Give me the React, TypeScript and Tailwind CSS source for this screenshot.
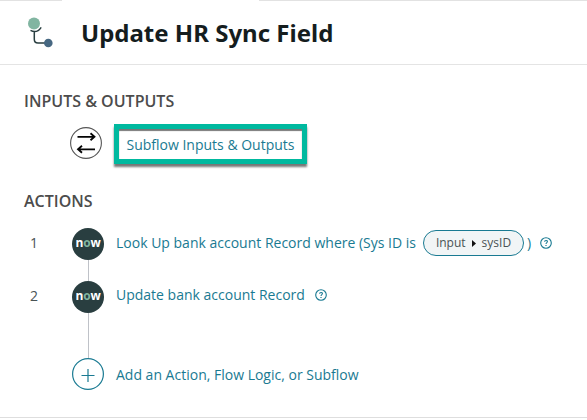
const Help = () => (
  <svg className="h-3 w-3 shrink-0" viewBox="0 0 12 12" fill="none" stroke="#197a92">
    <circle cx="6" cy="6" r="5.3" strokeWidth="1.1" />
    <path d="M4.6 4.8C4.6 3 7.5 3 7.4 4.7C7.3 5.6 6 5.6 6 7" strokeWidth="1.1" />
    <path d="M6 7.9V9" strokeWidth="1.2" />
  </svg>
);

const NowBadge = () => (
  <div className="flex h-8 w-8 items-center justify-center rounded-full bg-[#293e40] pb-0.5 font-['Open_Sans',sans-serif] text-xs leading-none font-bold tracking-[-0.15px] text-white">
    n<span className="text-[#81b5a1]">o</span>w
  </div>
);

export default function App() {
  return (
    <main className="h-[420px] w-[587px] overflow-hidden bg-white font-['Open_Sans',sans-serif] text-[#197a92]">
      <div className="flex h-px justify-between">
        <div className="w-[62px] bg-[#e2e2e2]" />
        <div className="w-[328px] bg-[#e2e2e2]" />
      </div>
      <header className="flex h-16 items-center border-b border-[#e4e4e4] pl-[27px]">
        <svg className="h-[34px] w-7" viewBox="0 0 28 34" fill="none">
          <circle cx="7" cy="7.5" r="6" fill="#81b5a1" />
          <path d="M3.5 14.3Q9.8 17.8 14.2 11.3M7.3 16V23.2Q7.3 27 11 27H18" stroke="#293e40" strokeWidth="1.5" />
          <circle cx="21.3" cy="27" r="4.3" fill="#476882" />
        </svg>
        <h1 className="ml-[26px] whitespace-nowrap font-['Noto_Sans',sans-serif] text-2xl font-bold text-[#151d1e]">Update HR Sync Field</h1>
      </header>

      <h2 className="mt-6 ml-6 h-6 whitespace-nowrap text-base leading-6 font-semibold text-[#4c4c4c]">INPUTS &amp; OUTPUTS</h2>
      <div className="mt-[10px] flex h-[42px] items-center pl-[70px]">
        <svg className="mb-[2px] h-8 w-8" viewBox="0 0 32 32" fill="none" stroke="#050505">
          <circle cx="16" cy="16" r="15.4" stroke="#555" strokeWidth="1.1" />
          <path d="M7.5 9.8H24M20.5 6.3L24.5 9.8L20.5 13.3M25 22.3H8.5M12 18.8L8 22.3L12 25.8" strokeWidth="1.8" />
        </svg>
        <div className="ml-3 flex h-10 w-[193px] items-center justify-center border-[5px] border-[#00b99f] pt-px whitespace-nowrap text-sm shadow-[0_3px_2px_#777,inset_0_2px_1px_#777]">
          Subflow Inputs &amp; Outputs
        </div>
      </div>
      <h2 className="mt-6 ml-6 h-6 whitespace-nowrap text-base leading-6 font-semibold text-[#4c4c4c]">ACTIONS</h2>

      <section className="mt-[15px] grid grid-cols-[72px_32px_1fr] text-sm">
        <div className="flex h-[30px] items-center pl-[30px] text-[#495354]">1</div>
        <NowBadge />
        <div className="flex h-[30px] items-center pl-3 whitespace-nowrap">
          Look Up bank account Record where (Sys ID is
          <span className="ml-[7px] flex h-[26px] w-[101px] shrink-0 items-center justify-center gap-1.5 rounded-full border border-[#197a92] bg-[#f1f5f6] text-xs text-[#495354]">
            Input
            <svg className="h-[7px] w-1" viewBox="0 0 4 7" fill="#111"><path d="M0 0L4 3.5L0 7Z" /></svg>
            sysID
          </span>
          <span className="mr-[9px] ml-[3px]">)</span>
          <Help />
        </div>
        <div className="col-start-2 mx-auto h-[21px] w-px bg-[#bfc2c8]" />
        <div className="col-start-1 flex h-[30px] items-center pl-[30px] text-[#495354]">2</div>
        <NowBadge />
        <div className="flex h-7 items-center pl-3 whitespace-nowrap">
          <span className="mr-[10px]">Update bank account Record</span>
          <Help />
        </div>
        <div className="col-start-2 mx-auto h-[45px] w-px bg-[#bfc2c8]" />
        <svg className="col-start-2 h-8 w-8" viewBox="0 0 32 32" fill="none" stroke="#197a92">
          <circle cx="16" cy="16" r="15.4" strokeWidth="1.2" />
          <path d="M9.5 17.5H22.5M16 11V24" strokeWidth="1.2" />
        </svg>
        <div className="flex h-[34px] items-center pl-3 whitespace-nowrap">Add an Action, Flow Logic, or Subflow</div>
      </section>
      <div className="mt-[25px] h-px bg-[#dedede]" />
    </main>
  );
}
